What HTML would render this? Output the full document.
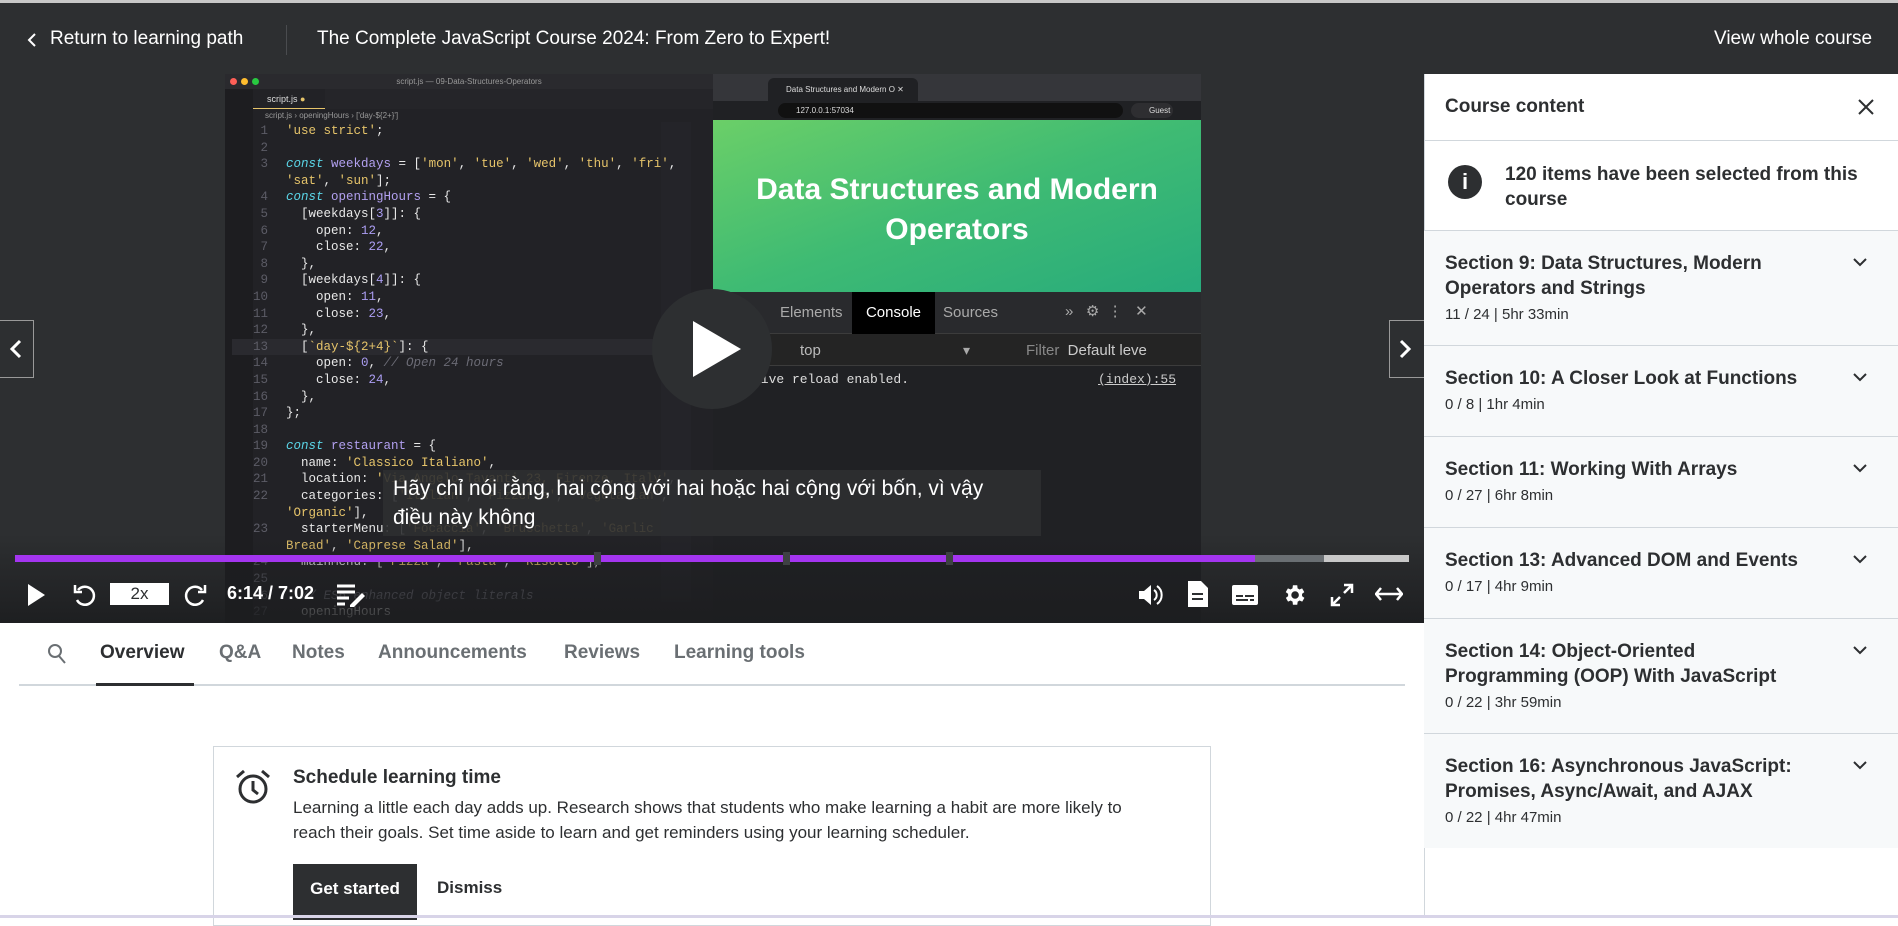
<!DOCTYPE html>
<html><head><meta charset="utf-8"><style>
*{margin:0;padding:0;box-sizing:border-box}
body{width:1898px;height:918px;overflow:hidden;background:#fff;font-family:"Liberation Sans",sans-serif;position:relative}
.a{position:absolute}
.mono{font-family:"Liberation Mono",monospace}
.hdr{left:0;top:0;width:1898px;height:74px;background:#2d2f31;border-top:3px solid #c8c8c8;color:#fff}
.code div{height:16.6px;white-space:pre}
.ln{color:#5c5c66;display:inline-block;width:36px;text-align:right;margin-right:18px}
.k{color:#5ad4e6;font-style:italic}.v{color:#b2a0f0}.s{color:#e6c46a}.n{color:#ab9df2}.c{color:#6b6b75;font-style:italic}.p{color:#e8e8e8}
.sec{left:1424px;width:474px;background:#f7f9fa;border-top:1px solid #d1d7dc;padding:20px 90px 0 21px}
.sec b{display:block;font-size:19px;color:#2d2f31;line-height:25px;font-weight:bold}
.sec span{display:block;font-size:15px;color:#2d2f31;margin-top:5px}
.chev{position:absolute;right:30px;top:26px}
.tab{top:642px;font-size:19px;font-weight:bold;color:#6a6f73}
</style></head><body>
<div class="a hdr">
 <svg class="a" style="left:26px;top:30px" width="12" height="14" viewBox="0 0 12 14"><path d="M9 1L3 7l6 6" stroke="#fff" stroke-width="2" fill="none"/></svg>
 <div class="a" style="left:50px;top:25px;font-size:19px">Return to learning path</div>
 <div class="a" style="left:286px;top:22px;width:1px;height:30px;background:#4a4c4f"></div>
 <div class="a" style="left:317px;top:25px;font-size:19px">The Complete JavaScript Course 2024: From Zero to Expert!</div>
 <div class="a" style="left:1714px;top:25px;font-size:19px">View whole course</div>
</div>
<div class="a" style="left:0;top:74px;width:1424px;height:549px;background:#2d2f31;overflow:hidden">
 <div class="a" style="left:225px;top:0;width:488px;height:549px;background:#222226">
  <div class="a" style="left:0;top:0;width:488px;height:15px;background:#2a2a2e;font-size:8px;color:#999;text-align:center;line-height:15px">script.js — 09-Data-Structures-Operators</div>
  <div class="a" style="left:5px;top:4px;width:7px;height:7px;border-radius:50%;background:#fe5f57"></div>
  <div class="a" style="left:16px;top:4px;width:7px;height:7px;border-radius:50%;background:#febc2e"></div>
  <div class="a" style="left:27px;top:4px;width:7px;height:7px;border-radius:50%;background:#28c840"></div>
  <div class="a" style="left:0;top:15px;width:28px;height:534px;background:#1d1d20"></div>
  <div class="a" style="left:28px;top:15px;width:460px;height:20px;background:#252529"></div>
  <div class="a" style="left:28px;top:15px;width:72px;height:20px;background:#222226;border-bottom:1px solid #e6c46a;font-size:9px;color:#ddd;line-height:20px;padding-left:14px">script.js <span style="color:#e6c46a">●</span></div>
  <div class="a" style="left:40px;top:37px;font-size:8px;color:#999">script.js › openingHours › ['day-${2+}']</div>
  <div class="a" style="left:436px;top:48px;width:30px;height:480px;background:#26262a;opacity:.8"></div>
 </div>
 <div class="a mono code" style="left:232px;top:49px;font-size:12.5px;color:#e8e8e8;line-height:16.6px">
<div><span class="ln">1</span><span class="s">'use strict'</span>;</div>
<div><span class="ln">2</span></div>
<div><span class="ln">3</span><span class="k">const</span> <span class="v">weekdays</span> = [<span class="s">'mon'</span>, <span class="s">'tue'</span>, <span class="s">'wed'</span>, <span class="s">'thu'</span>, <span class="s">'fri'</span>,</div>
<div><span class="ln"></span><span class="s">'sat'</span>, <span class="s">'sun'</span>];</div>
<div><span class="ln">4</span><span class="k">const</span> <span class="v">openingHours</span> = {</div>
<div><span class="ln">5</span>  [weekdays[<span class="n">3</span>]]: {</div>
<div><span class="ln">6</span>    open: <span class="n">12</span>,</div>
<div><span class="ln">7</span>    close: <span class="n">22</span>,</div>
<div><span class="ln">8</span>  },</div>
<div><span class="ln">9</span>  [weekdays[<span class="n">4</span>]]: {</div>
<div><span class="ln">10</span>    open: <span class="n">11</span>,</div>
<div><span class="ln">11</span>    close: <span class="n">23</span>,</div>
<div><span class="ln">12</span>  },</div>
<div style="background:#2a2a2f"><span class="ln">13</span>  [<span class="s">`day-${2+4}`</span>]: {</div>
<div><span class="ln">14</span>    open: <span class="n">0</span>, <span class="c">// Open 24 hours</span></div>
<div><span class="ln">15</span>    close: <span class="n">24</span>,</div>
<div><span class="ln">16</span>  },</div>
<div><span class="ln">17</span>};</div>
<div><span class="ln">18</span></div>
<div><span class="ln">19</span><span class="k">const</span> <span class="v">restaurant</span> = {</div>
<div><span class="ln">20</span>  name: <span class="s">'Classico Italiano'</span>,</div>
<div><span class="ln">21</span>  location: <span class="s">'Via Angelo Tavanti 23, Firenze, Italy'</span>,</div>
<div><span class="ln">22</span>  categories: [<span class="s">'Italian'</span>, <span class="s">'Pizzeria'</span>, <span class="s">'Vegetarian'</span>,</div>
<div><span class="ln"></span><span class="s">'Organic'</span>],</div>
<div><span class="ln">23</span>  starterMenu: [<span class="s">'Focaccia'</span>, <span class="s">'Bruschetta'</span>, <span class="s">'Garlic</span></div>
<div><span class="ln"></span><span class="s">Bread'</span>, <span class="s">'Caprese Salad'</span>],</div>
<div><span class="ln">24</span>  mainMenu: [<span class="s">'Pizza'</span>, <span class="s">'Pasta'</span>, <span class="s">'Risotto'</span>],</div>
<div><span class="ln">25</span></div>
<div><span class="ln">26</span>  <span class="c">// ES6 enhanced object literals</span></div>
<div><span class="ln">27</span>  openingHours</div>
 </div>
 <div class="a" style="left:713px;top:0;width:488px;height:549px;background:#202124">
  <div class="a" style="left:0;top:0;width:488px;height:27px;background:#35363a"></div>
  <div class="a" style="left:55px;top:4px;width:150px;height:23px;background:#202124;border-radius:6px 6px 0 0;font-size:8px;color:#ddd;line-height:23px;padding-left:18px">Data Structures and Modern O ✕</div>
  <div class="a" style="left:0;top:27px;width:488px;height:19px;background:#202124"></div>
  <div class="a" style="left:65px;top:29px;width:345px;height:15px;background:#111;border-radius:8px;font-size:8px;color:#ddd;line-height:15px;padding-left:18px">127.0.0.1:57034</div>
  <div class="a" style="left:418px;top:29px;width:42px;height:15px;background:#2e2e31;border-radius:8px;font-size:8px;color:#ddd;line-height:15px;padding-left:18px">Guest</div>
  <div class="a" style="left:0;top:46px;width:488px;height:172px;background:linear-gradient(160deg,#6bcf68,#3fbb73 50%,#27ab7c)"></div>
  <div class="a" style="left:0;top:96px;width:488px;text-align:center;color:#fff;font-weight:bold;font-size:30px;line-height:40px">Data Structures and Modern<br>Operators</div>
  <div class="a" style="left:0;top:218px;width:488px;height:42px;background:#292a2d;border-bottom:1px solid #3c3c3c"></div>
  <div class="a" style="left:67px;top:230px;font-size:15px;color:#aaa">Elements</div>
  <div class="a" style="left:139px;top:218px;width:83px;height:42px;background:#000;color:#fff;font-size:15px;line-height:42px;text-align:center">Console</div>
  <div class="a" style="left:230px;top:230px;font-size:15px;color:#aaa">Sources</div>
  <div class="a" style="left:352px;top:228px;font-size:15px;color:#aaa">» &nbsp; ⚙ &nbsp;⋮ &nbsp; ✕</div>
  <div class="a" style="left:0;top:260px;width:488px;height:32px;background:#242424;border-bottom:1px solid #3c3c3c"></div>
  <div class="a" style="left:87px;top:268px;font-size:15px;color:#bbb">top</div>
  <div class="a" style="left:250px;top:268px;font-size:14px;color:#aaa">▾</div>
  <div class="a" style="left:313px;top:268px;font-size:15px;color:#888">Filter &nbsp;<span style="color:#ccc">Default leve</span></div>
  <div class="a mono" style="left:40px;top:298px;font-size:13px;color:#ddd">live reload enabled.</div>
  <div class="a mono" style="left:385px;top:298px;font-size:13px;color:#ccc;text-decoration:underline">(index):55</div>
 </div>
 <div class="a" style="left:383px;top:396px;width:658px;height:66px;background:rgba(45,47,49,.9);color:#fff;font-size:21px;line-height:29px;padding:4px 10px">Hãy chỉ nói rằng, hai cộng với hai hoặc hai cộng với bốn, vì vậy<br>điều này không</div>
 <div class="a" style="left:652px;top:215px;width:120px;height:120px;border-radius:50%;background:#2d2f31"></div>
 <svg class="a" style="left:693px;top:247px" width="50" height="56"><path d="M0 0L48 28L0 56Z" fill="#fff"/></svg>
 <div class="a" style="left:0;top:246px;width:34px;height:58px;border:1px solid #999;border-left:none;background:#2d2f31"></div>
 <svg class="a" style="left:9px;top:265px" width="14" height="20"><path d="M11 2L3 10l8 8" stroke="#fff" stroke-width="3" fill="none"/></svg>
 <div class="a" style="left:1389px;top:246px;width:35px;height:58px;border:1px solid #999;border-right:none;background:#2d2f31"></div>
 <svg class="a" style="left:1398px;top:265px" width="14" height="20"><path d="M3 2l8 8-8 8" stroke="#fff" stroke-width="3" fill="none"/></svg>
 <div class="a" style="left:0;top:460px;width:1424px;height:89px;background:linear-gradient(rgba(28,29,31,0),rgba(28,29,31,.9))"></div>
 <div class="a" style="left:15px;top:481px;width:1240px;height:7px;background:#a435f0"></div>
 <div class="a" style="left:1255px;top:481px;width:69px;height:7px;background:#6a6f73"></div>
 <div class="a" style="left:1324px;top:481px;width:85px;height:7px;background:#c8c8c8"></div>
 <div class="a" style="left:594px;top:478px;width:7px;height:13px;background:#3e4143"></div>
 <div class="a" style="left:783px;top:478px;width:7px;height:13px;background:#3e4143"></div>
 <div class="a" style="left:946px;top:478px;width:7px;height:13px;background:#3e4143"></div>
 <svg class="a" style="left:26px;top:509px" width="20" height="24"><path d="M2 1L19 12L2 23Z" fill="#fff"/></svg>
 <svg class="a" style="left:72px;top:508px" width="24" height="26" viewBox="0 0 24 26"><path d="M6 8a9 9 0 1 1-1 10" stroke="#fff" stroke-width="2.5" fill="none"/><path d="M3 3v7h7" stroke="#fff" stroke-width="2.5" fill="none"/></svg>
 <div class="a" style="left:110px;top:509px;width:59px;height:22px;background:#fff;color:#2d2f31;font-size:17px;text-align:center;line-height:22px">2x</div>
 <svg class="a" style="left:184px;top:508px" width="24" height="26" viewBox="0 0 24 26"><path d="M18 8a9 9 0 1 0 1 10" stroke="#fff" stroke-width="2.5" fill="none"/><path d="M21 3v7h-7" stroke="#fff" stroke-width="2.5" fill="none"/></svg>
 <div class="a" style="left:227px;top:509px;font-size:18px;font-weight:bold;color:#fff">6:14 / 7:02</div>
 <svg class="a" style="left:336px;top:509px" width="30" height="24"><path d="M1 3h18M1 9h18M1 15h12M1 21h8" stroke="#fff" stroke-width="3"/><path d="M14 22l12-12 3 3-12 12h-3z" fill="#fff"/></svg>
 <svg class="a" style="left:1138px;top:509px" width="26" height="24"><path d="M1 8h5l7-6v20l-7-6H1z" fill="#fff"/><path d="M16 7a6 6 0 0 1 0 10M19 3a11 11 0 0 1 0 18" stroke="#fff" stroke-width="2" fill="none"/></svg>
 <svg class="a" style="left:1187px;top:506px" width="22" height="28"><path d="M1 1h13l7 7v19H1z" fill="#fff"/><path d="M5 14h11M5 19h11" stroke="#2d2f31" stroke-width="2"/></svg>
 <svg class="a" style="left:1231px;top:510px" width="28" height="22"><rect x="1" y="1" width="26" height="20" rx="2" fill="#fff"/><path d="M5 12h7M14 12h9M5 16h12M19 16h4" stroke="#2d2f31" stroke-width="2"/></svg>
 <svg class="a" style="left:1281px;top:508px" width="26" height="26" viewBox="0 0 24 24"><path fill="#fff" d="M19.4 13a7.5 7.5 0 0 0 0-2l2.1-1.6-2-3.5-2.5 1a7.6 7.6 0 0 0-1.700-1L15 3h-4l-.4 2.9a7.6 7.6 0 0 0-1.7 1l-2.5-1-2 3.5L6.6 11a7.5 7.5 0 0 0 0 2l-2.1 1.6 2 3.5 2.5-1a7.6 7.6 0 0 0 1.7 1L11 21h4l.4-2.9a7.6 7.6 0 0 0 1.7-1l2.5 1 2-3.5zM13 15.5A3.5 3.5 0 1 1 13 8.5a3.5 3.5 0 0 1 0 7z"/></svg>
 <svg class="a" style="left:1330px;top:509px" width="24" height="24"><path d="M14 2h8v8M22 2l-8 8M10 22H2v-8M2 22l8-8" stroke="#fff" stroke-width="2.5" fill="none"/></svg>
 <svg class="a" style="left:1375px;top:512px" width="28" height="16"><path d="M6 2L1 8l5 6M22 2l5 6-5 6M1 8h26" stroke="#fff" stroke-width="2.5" fill="none"/></svg>
</div>
<svg class="a" style="left:47px;top:643px" width="20" height="22"><circle cx="8" cy="8" r="6" stroke="#6a6f73" stroke-width="2" fill="none"/><path d="M12 13l6 7" stroke="#6a6f73" stroke-width="2"/></svg>
<div class="a tab" style="left:100px;color:#2d2f31">Overview</div>
<div class="a tab" style="left:219px">Q&amp;A</div>
<div class="a tab" style="left:292px">Notes</div>
<div class="a tab" style="left:378px">Announcements</div>
<div class="a tab" style="left:564px">Reviews</div>
<div class="a tab" style="left:674px">Learning tools</div>
<div class="a" style="left:19px;top:684px;width:1386px;height:2px;background:#d1d7dc"></div>
<div class="a" style="left:96px;top:683px;width:98px;height:3px;background:#2d2f31"></div>
<div class="a" style="left:213px;top:746px;width:998px;height:180px;border:1px solid #d1d7dc"></div>
<svg class="a" style="left:234px;top:768px" width="38" height="38" viewBox="0 0 38 38"><circle cx="19" cy="21" r="13" stroke="#2d2f31" stroke-width="3" fill="none"/><path d="M19 13v9l5 4" stroke="#2d2f31" stroke-width="3" fill="none"/><path d="M3 9l7-6M35 9l-7-6" stroke="#2d2f31" stroke-width="3"/></svg>
<div class="a" style="left:293px;top:767px;font-size:19px;font-weight:bold;color:#2d2f31">Schedule learning time</div>
<div class="a" style="left:293px;top:795px;font-size:17px;line-height:25px;color:#2d2f31;width:860px">Learning a little each day adds up. Research shows that students who make learning a habit are more likely to reach their goals. Set time aside to learn and get reminders using your learning scheduler.</div>
<div class="a" style="left:293px;top:864px;width:124px;height:56px;background:#2d2f31;color:#fff;font-size:17px;font-weight:bold;line-height:50px;text-align:center">Get started</div>
<div class="a" style="left:437px;top:878px;font-size:17px;font-weight:bold;color:#2d2f31">Dismiss</div>
<div class="a" style="left:1424px;top:74px;width:474px;height:844px;background:#fff;border-left:1px solid #d1d7dc"></div>
<div class="a" style="left:1445px;top:96px;font-size:19px;font-weight:bold;color:#2d2f31">Course content</div>
<svg class="a" style="left:1858px;top:99px" width="16" height="16"><path d="M1 1l14 14M15 1L1 15" stroke="#2d2f31" stroke-width="2"/></svg>
<div class="a" style="left:1424px;top:140px;width:474px;height:1px;background:#d1d7dc"></div>
<div class="a" style="left:1448px;top:165px;width:34px;height:34px;border-radius:50%;background:#2d2f31;color:#fff;font-weight:bold;font-size:22px;text-align:center;line-height:34px">i</div>
<div class="a" style="left:1505px;top:162px;font-size:19px;font-weight:bold;color:#2d2f31;line-height:25px;width:370px">120 items have been selected from this course</div>
<div class="sec a" style="top:230px;height:115px"><b>Section 9: Data Structures, Modern Operators and Strings</b><span>11 / 24 | 5hr 33min</span><svg class="chev" width="16" height="10"><path d="M2 2l6 6 6-6" stroke="#2d2f31" stroke-width="2" fill="none"/></svg></div>
<div class="sec a" style="top:345px;height:91px"><b>Section 10: A Closer Look at Functions</b><span>0 / 8 | 1hr 4min</span><svg class="chev" width="16" height="10"><path d="M2 2l6 6 6-6" stroke="#2d2f31" stroke-width="2" fill="none"/></svg></div>
<div class="sec a" style="top:436px;height:91px"><b>Section 11: Working With Arrays</b><span>0 / 27 | 6hr 8min</span><svg class="chev" width="16" height="10"><path d="M2 2l6 6 6-6" stroke="#2d2f31" stroke-width="2" fill="none"/></svg></div>
<div class="sec a" style="top:527px;height:91px"><b>Section 13: Advanced DOM and Events</b><span>0 / 17 | 4hr 9min</span><svg class="chev" width="16" height="10"><path d="M2 2l6 6 6-6" stroke="#2d2f31" stroke-width="2" fill="none"/></svg></div>
<div class="sec a" style="top:618px;height:115px"><b>Section 14: Object-Oriented<br>Programming (OOP) With JavaScript</b><span>0 / 22 | 3hr 59min</span><svg class="chev" width="16" height="10"><path d="M2 2l6 6 6-6" stroke="#2d2f31" stroke-width="2" fill="none"/></svg></div>
<div class="sec a" style="top:733px;height:115px"><b>Section 16: Asynchronous JavaScript: Promises, Async/Await, and AJAX</b><span>0 / 22 | 4hr 47min</span><svg class="chev" width="16" height="10"><path d="M2 2l6 6 6-6" stroke="#2d2f31" stroke-width="2" fill="none"/></svg></div>
<div class="a" style="left:0;top:915px;width:1898px;height:3px;background:#d8d4e8"></div>
</body></html>
